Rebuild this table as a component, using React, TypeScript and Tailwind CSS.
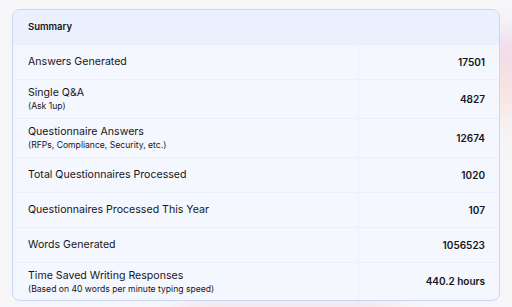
const rows = [
  { label: "Answers Generated", value: "17501", h: "h-[35px]" },
  { label: "Single Q&A", note: "(Ask 1up)", value: "4827", h: "h-[39px]" },
  { label: "Questionnaire Answers", note: "(RFPs, Compliance, Security, etc.)", value: "12674", h: "h-[39px]" },
  { label: "Total Questionnaires Processed", value: "1020", h: "h-[35px]" },
  { label: "Questionnaires Processed This Year", value: "107", h: "h-[35px]" },
  { label: "Words Generated", value: "1056523", h: "h-[35px]" },
  { label: "Time Saved Writing Responses", note: "(Based on 40 words per minute typing speed)", value: "440.2 hours", h: "h-[38px]" },
];

export default function App() {
  return (
    <div className="relative h-[307px] w-[512px] overflow-hidden bg-[#f6f6f8] font-['Inter',sans-serif] text-[#15151a]">
      {/* soft colour glow behind the card */}
      <div className="pointer-events-none absolute -right-[30px] top-[30px] h-[110px] w-[70px] rounded-full bg-gradient-to-b from-[#ecd9f0] via-[#f8e2df] to-[#f6f6f8] blur-[12px]" />
      <div className="pointer-events-none absolute bottom-[-20px] left-[180px] h-[30px] w-[220px] rounded-full bg-[#f5e3ea] blur-[14px]" />

      <div className="relative flex flex-col pl-[12px] pr-[12px] pt-[9px]">
        <div className="overflow-hidden rounded-[8px] border border-[#c9d6f7] bg-[#f5f7fe]">
          <div className="flex h-[34px] items-center bg-[#eaf0fd] px-[15px] text-[9.5px] font-semibold">
            Summary
          </div>
          {rows.map((r) => (
            <div key={r.label} className={`grid grid-cols-[346px_1fr] border-t border-[#ebeffb] ${r.h}`}>
              <div className="flex flex-col justify-center border-r border-[#ebeffb] px-[15px]">
                <span className="text-[10.6px] leading-[14px]">{r.label}</span>
                {r.note && <span className="text-[8.6px] leading-[12px]">{r.note}</span>}
              </div>
              <div className="flex items-center justify-end pr-[14px] text-[10px] font-semibold">
                {r.value}
              </div>
            </div>
          ))}
        </div>
      </div>
    </div>
  );
}
